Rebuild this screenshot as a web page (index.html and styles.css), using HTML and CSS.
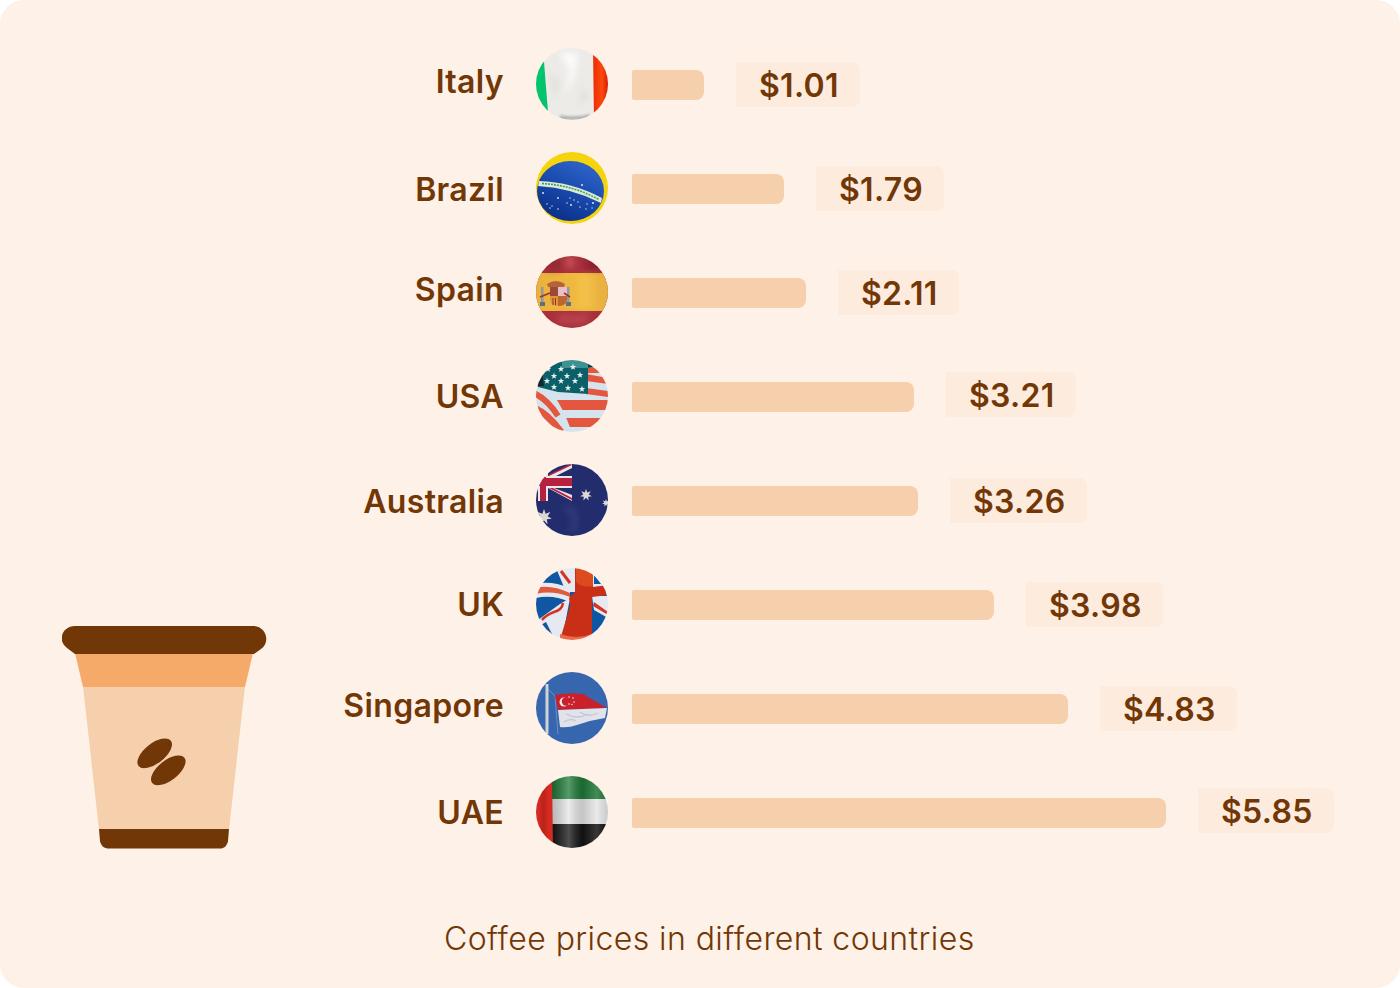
FILE: index.html
```html
<!DOCTYPE html>
<html lang="en">
<head>
  <meta charset="UTF-8" />
  <meta name="viewport" content="width=device-width, initial-scale=1.0" />
  <title>Coffee prices in different countries</title>
  <link rel="stylesheet" href="styles.css">
</head>
<body>
  <svg class="defs" width="0" height="0" aria-hidden="true">
    <defs>
      <filter id="soft" color-interpolation-filters="sRGB"><feGaussianBlur stdDeviation=".3" /></filter>
      <filter id="blur1" x="-30%" y="-30%" width="160%" height="160%"><feGaussianBlur stdDeviation="1.2" /></filter>
      <filter id="blur3" x="-50%" y="-50%" width="200%" height="200%"><feGaussianBlur stdDeviation="3" /></filter>
      <linearGradient id="folds" x1="0" x2="1" y1="0" y2="0">
        <stop offset="0" stop-color="#000" stop-opacity=".2" />
        <stop offset=".3" stop-color="#fff" stop-opacity=".25" />
        <stop offset=".55" stop-color="#000" stop-opacity=".14" />
        <stop offset=".8" stop-color="#fff" stop-opacity=".15" />
        <stop offset="1" stop-color="#000" stop-opacity=".12" />
      </linearGradient>
      <linearGradient id="br-blue" x1="0" x2=".5" y1=".9" y2="0">
        <stop offset="0" stop-color="#0a2b82" />
        <stop offset=".5" stop-color="#1646a8" />
        <stop offset="1" stop-color="#2a5fc4" />
      </linearGradient>
      <linearGradient id="es-yellow" x1="0" x2="1" y1="0" y2="0">
        <stop offset="0" stop-color="#e9b23c" />
        <stop offset=".6" stop-color="#f0ba40" />
        <stop offset="1" stop-color="#e7b040" />
      </linearGradient>
      <linearGradient id="it-red" x1="0" x2="1" y1="0" y2="0">
        <stop offset="0" stop-color="#ee2a08" />
        <stop offset=".6" stop-color="#fb4a0a" />
        <stop offset="1" stop-color="#d81a08" />
      </linearGradient>
      <polygon id="star" points="0,-3.400 .8,-1.100 3.200,-1.100 1.300,.4 2,2.700 0,1.400 -2,2.700 -1.300,.4 -3.200,-1.100 -.8,-1.100" />
      <polygon id="star7" points="0,-8 1.600,-3.300 6.300,-5 3.600,-.8 7.800,1.800 2.900,2.200 3.500,7.200 0,3.600 -3.500,7.200 -2.900,2.200 -7.800,1.800 -3.600,-.8 -6.300,-5 -1.600,-3.300" />
    </defs>
  </svg>

  <main class="card">
    <div class="top">
      <div class="cup-col">
        <svg class="cup" width="205" height="223" viewBox="0 0 205 223">
          <path d="M21 60 H183 L167 204 H37 Z" fill="#f6cfad" />
          <path d="M13 27 H191 L183 61 H21 Z" fill="#f5aa69" />
          <path d="M13 0 H191 C204 0 209 16 199 23 L192 28 H13 L5 22 C-5 15 0 0 13 0 Z" fill="#723706" />
          <path d="M37 203 H167 L166 215 C165 220 162 222.500 158 222.500 H47 C42 222.500 39 220 38 215 Z" fill="#723706" />
          <ellipse cx="92.700" cy="127.300" rx="20.500" ry="10" transform="rotate(-38 92.700 127.300)" fill="#723706" />
          <ellipse cx="106.300" cy="144.300" rx="20.500" ry="10" transform="rotate(-38 106.300 144.300)" fill="#723706" />
        </svg>
      </div>

      <div class="rows">
        <div class="row">
          <span class="country">Italy</span>
          <svg class="flag" viewBox="0 0 72 72">
            <rect width="72" height="72" fill="#ecebe8" />
            <path d="M0 0 H8 L8 14 L12 64 H0 Z" fill="#03c36c" filter="url(#soft)" />
            <path d="M57 0 H72 V72 H58 Z" fill="url(#it-red)" filter="url(#soft)" />
            <g filter="url(#blur3)">
              <path d="M24 4 L34 24 L28 46 L38 30 L42 6 Z" fill="#fff" opacity=".8" />
              <path d="M38 32 L48 44 L42 60 L52 46 Z" fill="#cfc8c3" opacity=".6" />
              <path d="M14 22 L24 36 L18 52 Z" fill="#d8d4d0" opacity=".5" />
            </g>
            <path d="M24 67 Q40 70 54 66 V72 H24 Z" fill="#a3a8a8" opacity=".8" filter="url(#blur1)" />
          </svg>
          <div class="bar" style="width: 72px"></div>
          <span class="price">$1.01</span>
        </div>

        <div class="row">
          <span class="country">Brazil</span>
          <svg class="flag" viewBox="0 0 72 72">
            <rect width="72" height="72" fill="#f5d40d" />
            <ellipse cx="34.500" cy="39" rx="33.500" ry="30" fill="url(#br-blue)" />
            <path d="M3 29 Q36 30 66 46 L65 51 Q36 36 2 34 Z" fill="#dfe9d8" />
            <path d="M6 31.500 Q36 33 63 47.500" fill="none" stroke="#3da35a" stroke-width="1.600" stroke-dasharray="2 1" />
            <g fill="#dfe6f5">
              <circle cx="7" cy="41" r="1" /><circle cx="22" cy="46" r=".9" /><circle cx="46" cy="33" r="1" />
              <circle cx="11" cy="52" r=".7" /><circle cx="16" cy="54" r=".7" /><circle cx="34" cy="46" r=".7" />
              <circle cx="31" cy="51" r=".7" /><circle cx="35" cy="53" r="1" /><circle cx="22" cy="57" r=".8" />
              <circle cx="42" cy="50" r=".7" /><circle cx="44" cy="55" r=".7" /><circle cx="51" cy="52" r=".7" />
              <circle cx="57" cy="51" r="1" /><circle cx="56" cy="56" r=".7" /><circle cx="50" cy="57" r=".7" />
              <circle cx="14" cy="56" r=".7" /><circle cx="38" cy="48" r=".7" />
            </g>
          </svg>
          <div class="bar" style="width: 152px"></div>
          <span class="price">$1.79</span>
        </div>

        <div class="row">
          <span class="country">Spain</span>
          <svg class="flag" viewBox="0 0 72 72">
            <rect width="72" height="72" fill="#a8303b" />
            <rect y="17" width="72" height="38" fill="url(#es-yellow)" />
            <g filter="url(#blur3)">
              <rect x="30" y="0" width="8" height="12" fill="#d0616a" opacity=".7" />
              <rect x="12" y="2" width="12" height="13" fill="#7d1d2a" opacity=".5" />
              <rect x="50" y="2" width="16" height="12" fill="#741825" opacity=".6" />
              <rect x="22" y="58" width="30" height="10" fill="#c24d58" opacity=".6" />
              <rect x="44" y="20" width="12" height="32" fill="#ffd866" opacity=".3" />
            </g>
            <g filter="url(#soft)">
              <path d="M11 28 Q20 22 29 28 L28 31 H12 Z" fill="#b5643a" />
              <rect x="14" y="31" width="8" height="9" fill="#9c4a38" />
              <rect x="22" y="31" width="9" height="9" fill="#e8c0cc" />
              <path d="M14 40 H22 V50 Q15 50 14 44 Z" fill="#d99a36" />
              <path d="M22 40 H31 V44 Q30 50 22 50 Z" fill="#c0652e" />
              <path d="M17 42 V49 M19.500 42 V49" stroke="#a03028" stroke-width="1" />
              <rect x="5" y="31" width="2.500" height="15" fill="#8f9a9f" />
              <rect x="31" y="31" width="2.500" height="15" fill="#8f9a9f" />
              <rect x="4" y="46" width="5" height="4" fill="#5d7083" />
              <rect x="30" y="46" width="5" height="4" fill="#5d7083" />
              <path d="M4 41 L14 37 M34 41 L28 37" stroke="#a62f2c" stroke-width="1.600" />
            </g>
          </svg>
          <div class="bar" style="width: 174px"></div>
          <span class="price">$2.11</span>
        </div>

        <div class="row">
          <span class="country">USA</span>
          <svg class="flag" viewBox="0 0 72 72">
            <g filter="url(#soft)">
              <rect width="72" height="72" fill="#d5e3ee" />
              <g fill="#e4573f">
                <rect x="45" y="8" width="27" height="5" />
                <path d="M50 14 L72 18 V24 L50 21 Z" />
                <path d="M50 28 L72 31 V37 L50 34 Z" />
                <rect x="14" y="40" width="58" height="10" />
                <rect x="26" y="58" width="46" height="9" />
              </g>
              <path d="M4 26 Q20 38 32 72" fill="none" stroke="#d5e3ee" stroke-width="7" />
              <path d="M-2 33 Q12 40 22 56" fill="none" stroke="#e4573f" stroke-width="6" />
              <path d="M-2 48 Q12 54 25 72" fill="none" stroke="#e4573f" stroke-width="7" />
              <path d="M24 70 L28 72 H20 Z" fill="#2b2b2b" />
              <path d="M0 0 H72 V6 L52 8 V34 L22 32 L2 27 L0 20 Z" fill="#0b6068" />
              <path d="M26 0 H52 V8 H26 Z" fill="#3f9191" />
              <path d="M52 0 H72 V7 H52 Z" fill="#20332f" />
              <path d="M0 10 L6 12 L8 26 L0 26 Z" fill="#13282a" />
              <g fill="#e9f0f3">
                <use href="#star" x="12" y="9" /><use href="#star" x="25" y="9" /><use href="#star" x="37" y="7" />
                <use href="#star" x="18" y="16" /><use href="#star" x="31" y="16" /><use href="#star" x="44" y="15" />
                <use href="#star" x="11" y="21" /><use href="#star" x="25" y="21" /><use href="#star" x="39" y="21" />
                <use href="#star" x="18" y="27" /><use href="#star" x="32" y="28" /><use href="#star" x="46" y="29" />
              </g>
            </g>
          </svg>
          <div class="bar" style="width: 282px"></div>
          <span class="price">$3.21</span>
        </div>

        <div class="row">
          <span class="country">Australia</span>
          <svg class="flag" viewBox="0 0 72 72">
            <g filter="url(#soft)">
              <rect width="72" height="72" fill="#232d6e" />
              <path d="M30 44 Q44 50 36 68" fill="none" stroke="#3a4580" stroke-width="7" opacity=".6" filter="url(#blur3)" />
              <path d="M36 0 L10 13 H18 L36 4 Z M12 24 L36 37 V31 L18 24 Z" fill="#eee6e6" />
              <path d="M34 0 L10 12 H13 L36 1 Z M13 24 L36 36 V34 L17 24 Z" fill="#b3233f" />
              <rect x="0" y="12" width="36" height="12" fill="#eee6e6" />
              <rect x="2" y="0" width="10" height="37" fill="#eee6e6" />
              <rect x="0" y="14" width="36" height="8" fill="#b5213f" />
              <rect x="4" y="13" width="6" height="24" fill="#b5213f" />
              <g fill="#dcd8d6">
                <use href="#star7" transform="translate(50 31) scale(.75)" />
                <use href="#star7" transform="translate(8 53)" />
                <use href="#star7" transform="translate(70 39) scale(.5)" />
              </g>
            </g>
          </svg>
          <div class="bar" style="width: 286px"></div>
          <span class="price">$3.26</span>
        </div>

        <div class="row">
          <span class="country">UK</span>
          <svg class="flag" viewBox="0 0 72 72">
            <g filter="url(#soft)">
              <rect width="72" height="72" fill="#0f57a3" />
              <!-- top centre and right of the cross -->
              <path d="M20 0 H40 V24 H30 Z" fill="#e6e9f2" />
              <path d="M25 3 L34 15" stroke="#d6341f" stroke-width="3" />
              <path d="M55 0 H72 V20 H55 Z" fill="#e6e9f2" />
              <path d="M58 7 L65 16 H58 Z" fill="#0f57a3" />
              <!-- lower right -->
              <path d="M56 28 H72 V50 L58 42 Z" fill="#e6e9f2" />
              <path d="M58 34 L72 44 V47 L57 38 Z" fill="#d6341f" />
              <!-- left waves -->
              <path d="M0 16 Q14 12 34 20 V34 Q16 26 0 30 Z" fill="#e6e9f2" />
              <path d="M0 20 Q14 16 34 25 V29 Q16 22 0 26 Z" fill="#e25a3c" />
              <!-- lower left white diagonal -->
              <path d="M34 30 L26 72 H14 L2 52 Q10 46 24 36 Z" fill="#e6e9f2" />
              <path d="M0 60 L10 54 L18 70 H6 Z" fill="#0f57a3" />
              <path d="M27 35 Q26 42 18 44 Q10 47 6 52" fill="none" stroke="#d6341f" stroke-width="2.500" />
              <!-- red cross -->
              <path d="M39 0 H57 V19 L72 17 V27 L56 29 V72 H24 L34 38 L33 30 L39 24 Z" fill="#c92f16" />
              <path d="M40 0 H57 V18 Q46 20 40 14 Z" fill="#dc4a20" />
              <path d="M24 66 Q40 72 56 66 V72 H24 Z" fill="#ea6b4a" />
            </g>
          </svg>
          <div class="bar" style="width: 362px"></div>
          <span class="price">$3.98</span>
        </div>

        <div class="row">
          <span class="country">Singapore</span>
          <svg class="flag" viewBox="0 0 72 72">
            <g filter="url(#soft)">
              <rect width="72" height="72" fill="#3566ae" />
              <rect x="9.500" y="12" width="3" height="50" fill="#cfd3d6" />
              <path d="M12 17 L19 24 L22 62" fill="none" stroke="#a9b6cc" stroke-width=".5" />
              <path d="M19 23 Q34 20 47 22 Q60 30 71 36 L22 38 Z" fill="#c9202c" />
              <path d="M22 38 L71 36 L69 46 Q55 48 41 53 Q32 56 24 55 Z" fill="#e2e3ea" />
              <path d="M30 42 Q42 48 52 42 M44 40 Q52 46 62 41 M28 50 Q34 46 40 49" fill="none" stroke="#c4c7d2" stroke-width="1.300" />
              <circle cx="28" cy="30" r="4.500" fill="#f5eeee" />
              <circle cx="30" cy="29.500" r="4.200" fill="#c9202c" />
              <g fill="#f0dcdc">
                <circle cx="33" cy="25" r=".8" /><circle cx="37" cy="26" r=".8" /><circle cx="38" cy="30" r=".8" />
                <circle cx="33" cy="32" r=".8" /><circle cx="36" cy="32.500" r=".8" />
              </g>
            </g>
          </svg>
          <div class="bar" style="width: 436px"></div>
          <span class="price">$4.83</span>
        </div>

        <div class="row">
          <span class="country">UAE</span>
          <svg class="flag" viewBox="0 0 72 72">
            <g filter="url(#soft)">
              <rect width="72" height="24" fill="#1f7a38" />
              <rect y="23" width="72" height="26" fill="#e6e6e6" />
              <rect y="48" width="72" height="24" fill="#141414" />
              <rect x="16" width="56" height="72" fill="url(#folds)" />
              <path d="M0 0 H16 L17 72 H0 Z" fill="#d32a22" />
              <path d="M5 0 H10 V72 H5 Z" fill="#a81c18" opacity=".5" filter="url(#blur1)" />
            </g>
          </svg>
          <div class="bar" style="width: 534px"></div>
          <span class="price">$5.85</span>
        </div>
      </div>
    </div>

    <p class="caption">Coffee prices in different countries</p>
  </main>
</body>
</html>
```

FILE: styles.css
```css
html, body {
  margin: 0;
  padding: 0;
  background-color: #fff;
}

.defs {
  display: block;
  height: 0;
}

.card {
  width: 1400px;
  height: 988px;
  box-sizing: border-box;
  padding-top: 48px;
  background-color: #fef1e7;
  border-radius: 24px;
  color: #723706;
  font-family: Inter, "Liberation Sans", sans-serif;
  overflow: hidden;
}

.top {
  display: flex;
}

.cup-col {
  display: flex;
  align-items: flex-end;
  padding-left: 62px;
}

.cup {
  display: block;
  margin-bottom: -1px;
}

.rows {
  display: flex;
  flex-direction: column;
  gap: 32px;
}

.row {
  display: flex;
  align-items: center;
  height: 72px;
}

.country {
  width: 237px;
  text-align: right;
  font-size: 32px;
  font-weight: 600;
  line-height: 40px;
  letter-spacing: 0.35px;
}

.flag {
  display: block;
  flex: none;
  width: 72px;
  height: 72px;
  margin-left: 32px;
  border-radius: 50%;
}

.bar {
  height: 30px;
  margin-left: 24px;
  margin-top: 2px;
  background-color: #f6cfad;
  border-radius: 2px 8px 8px 2px;
}

.price {
  height: 45px;
  margin-left: 32px;
  padding: 0 21px 0 23px;
  background-color: #fdebdd;
  border-radius: 0 8px 8px 0;
  font-size: 32px;
  font-weight: 600;
  line-height: 47px;
  letter-spacing: 0.3px;
}

/* the source chart isn't quite on a grid, labels drift a px or two */
.row:nth-child(1) .country { margin-top: -4px; }
.row:nth-child(2) .country { margin-top: 4px; }
.row:nth-child(3) .country { margin-top: -4px; }
.row:nth-child(4) .country { margin-top: 2px; }
.row:nth-child(5) .country { margin-top: 4px; }
.row:nth-child(6) .country { margin-top: 2px; }
.row:nth-child(7) .country { margin-top: -4px; }
.row:nth-child(8) .country { margin-top: 2px; }
.row:nth-child(4) .price,
.row:nth-child(8) .price { margin-top: -4px; }

.caption {
  margin: 71px 0 0;
  padding-left: 444px;
  font-size: 32px;
  font-weight: 300;
  line-height: 40px;
  letter-spacing: 0.42px;
}
```
